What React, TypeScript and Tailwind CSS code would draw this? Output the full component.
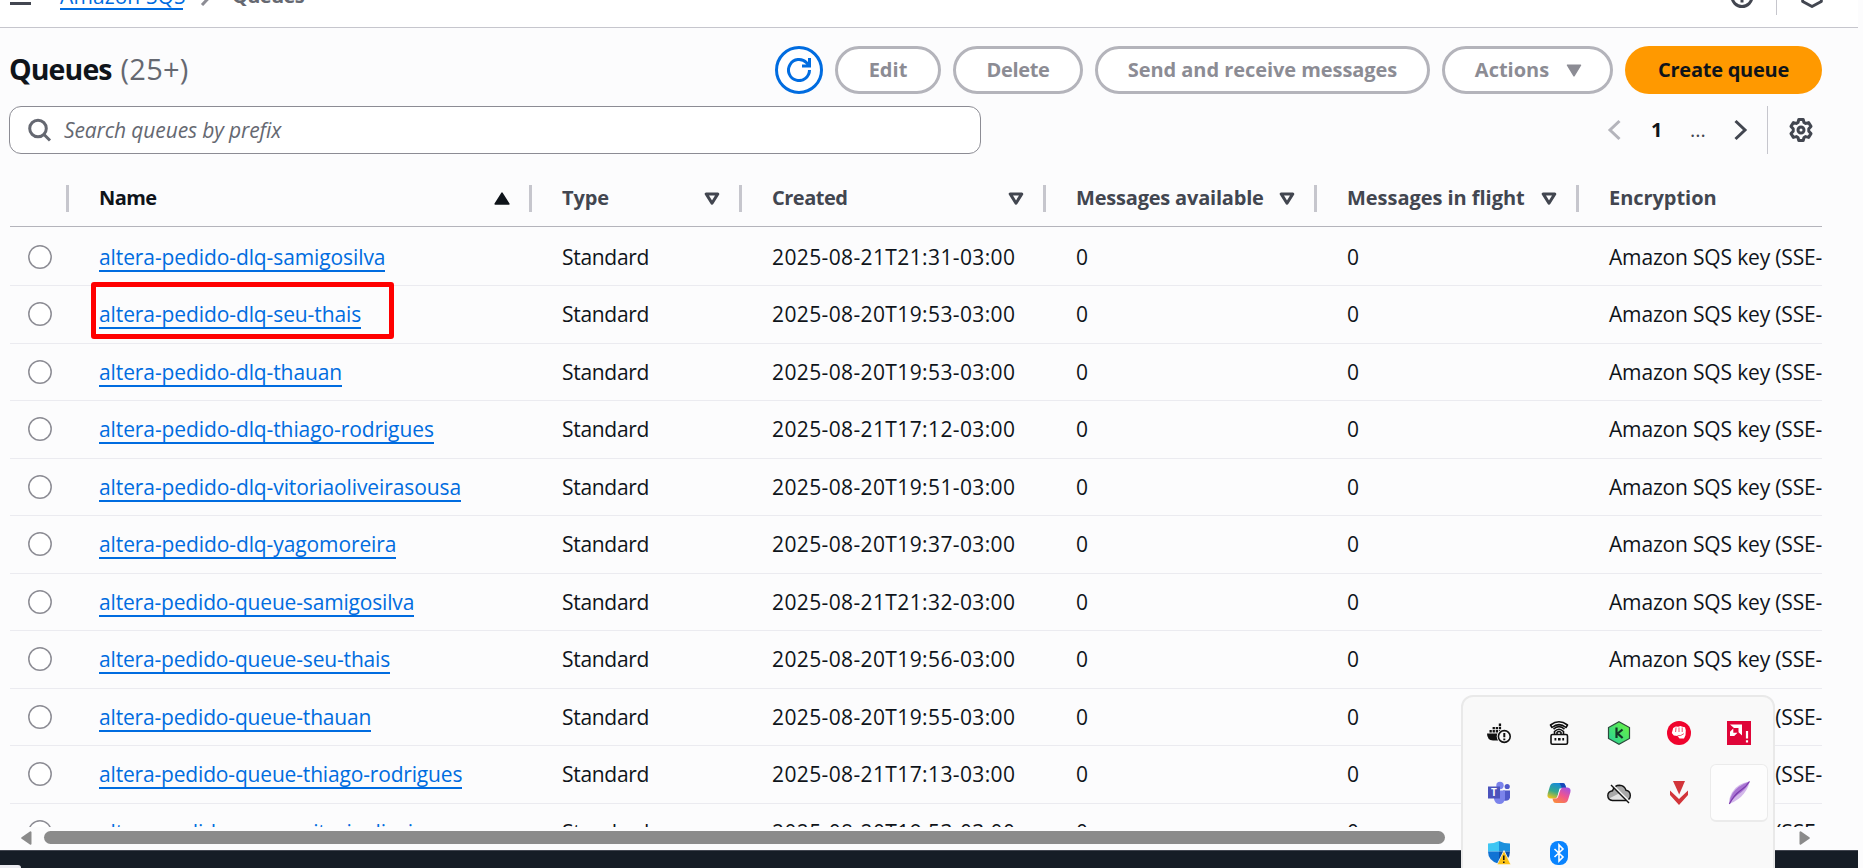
import React from "react";

type Queue = { name: string; created: string };

const queues: Queue[] = [
  { name: "altera-pedido-dlq-samigosilva", created: "2025-08-21T21:31-03:00" },
  { name: "altera-pedido-dlq-seu-thais", created: "2025-08-20T19:53-03:00" },
  { name: "altera-pedido-dlq-thauan", created: "2025-08-20T19:53-03:00" },
  { name: "altera-pedido-dlq-thiago-rodrigues", created: "2025-08-21T17:12-03:00" },
  { name: "altera-pedido-dlq-vitoriaoliveirasousa", created: "2025-08-20T19:51-03:00" },
  { name: "altera-pedido-dlq-yagomoreira", created: "2025-08-20T19:37-03:00" },
  { name: "altera-pedido-queue-samigosilva", created: "2025-08-21T21:32-03:00" },
  { name: "altera-pedido-queue-seu-thais", created: "2025-08-20T19:56-03:00" },
  { name: "altera-pedido-queue-thauan", created: "2025-08-20T19:55-03:00" },
  { name: "altera-pedido-queue-thiago-rodrigues", created: "2025-08-21T17:13-03:00" },
  { name: "altera-pedido-queue-vitoriaoliveirasousa", created: "2025-08-20T19:53-03:00" },
];

const columns = "grid grid-cols-[59px_463px_210px_304px_271px_262px_243px]";

function SortIcon({ active }: { active?: boolean }) {
  return active ? (
    <svg viewBox="0 0 16 13" className="h-[13px] w-4 shrink-0">
      <path d="M8 1.2 14.8 12H1.2Z" fill="#0f141a" stroke="#0f141a" strokeWidth="1.6" strokeLinejoin="round" />
    </svg>
  ) : (
    <svg viewBox="0 0 16 13" className="h-[13px] w-4 shrink-0">
      <path d="M2.2 1.9H13.8L8 11.2Z" fill="none" stroke="#424650" strokeWidth="3" strokeLinejoin="round" />
    </svg>
  );
}

function HeaderCell({ label, className, sort, active }: { label: string; className: string; sort: boolean; active?: boolean }) {
  return (
    <div className="flex h-full items-center justify-between">
      <span className={`pl-[30px] text-[20px] font-bold whitespace-nowrap ${active ? "text-[#0f141a]" : "text-[#424650]"} ${className}`}>{label}</span>
      {sort && (
        <span className="flex items-center gap-[19px]">
          <SortIcon active={active} />
          <span className="h-[27px] w-[3px] bg-[#c6c6cd]" />
        </span>
      )}
    </div>
  );
}

function DisabledButton({ children, className }: { children: React.ReactNode; className: string }) {
  return (
    <button className={`flex h-12 items-center justify-center rounded-full border-[3px] border-[#b4b4bb] bg-white text-[20px] font-bold whitespace-nowrap text-[#8c8c94] ${className}`}>
      {children}
    </button>
  );
}

function TopBar() {
  return (
    <header className="flex h-7 w-[1858px] items-start justify-between overflow-hidden border-b border-[#c6c6cd] bg-white">
      <div className="-mt-[21px] flex h-[31px] items-end pl-[10px]">
        <span className="mb-[5px] h-[3px] w-[21px] bg-[#424650]" />
        <a className="ml-[29px] h-[31px] w-[123px] border-b-2 border-[#006ce0] text-[21px] leading-[34px] tracking-[0.1px] whitespace-nowrap text-[#006ce0]">Amazon SQS</a>
        <svg viewBox="0 0 14 22" className="mb-[4px] ml-[17px] h-[22px] w-[14px]" fill="none" stroke="#8c8c94" strokeWidth="3">
          <path d="M2 1 11.5 11 2 21" />
        </svg>
        <span className="ml-[18px] h-[31px] text-[20px] leading-[34px] font-bold tracking-[-0.6px] text-[#656871]">Queues</span>
      </div>
      <div className="-mt-4 flex h-[31px] items-start pr-[34px]">
        <svg viewBox="0 0 24 24" className="size-6" fill="none" stroke="#424650" strokeWidth="3">
          <circle cx="12" cy="12.5" r="10" />
          <path d="M12 10.5V18.500" />
        </svg>
        <span className="ml-[22px] h-[31px] w-px bg-[#c6c6cd]" />
        <svg viewBox="0 0 24 24" className="ml-[23px] size-6" fill="none" stroke="#424650" strokeWidth="3" strokeLinejoin="round">
          <path d="M12 1.8 21.300 7v10.500L12 22.500 2.700 17.500V7Z" />
        </svg>
      </div>
    </header>
  );
}

function TitleRow() {
  return (
    <div className="flex h-12 items-center justify-between">
      <h1 className="-ml-px flex items-baseline pb-0.5">
        <span className="text-[28.5px] font-bold tracking-[-0.9px] text-[#0f141a]">Queues</span>
        <span className="ml-[9px] text-[29px] tracking-[0.2px] text-[#656871]">(25+)</span>
      </h1>
      <div className="flex gap-3">
        <button className="flex size-12 items-center justify-center rounded-full border-[3px] border-[#006ce0] bg-white">
          <svg viewBox="0 0 24 24" className="size-6" fill="none" stroke="#006ce0" strokeWidth="3">
            <path d="M22.500 12A10.500 10.500 0 1 1 19.600 4.800L21.800 7.500" />
            <path d="M22.500 0V7.900H15" />
          </svg>
        </button>
        <DisabledButton className="w-[106px]">Edit</DisabledButton>
        <DisabledButton className="w-[130px] tracking-[-0.33px]">Delete</DisabledButton>
        <DisabledButton className="w-[335px] tracking-[-0.06px]">Send and receive messages</DisabledButton>
        <DisabledButton className="w-[171px] gap-[17px] pl-[2px]">
          Actions
          <svg viewBox="0 0 16 13" className="h-[13px] w-4">
            <path d="M1.500 1.200h13L8 11.800Z" fill="#8c8c94" stroke="#8c8c94" strokeWidth="1.5" strokeLinejoin="round" />
          </svg>
        </DisabledButton>
        <button className="h-12 w-[197px] rounded-full bg-[#ff9900] text-[20px] font-bold tracking-[-0.25px] text-[#0f141a]">Create queue</button>
      </div>
    </div>
  );
}

function FilterRow() {
  return (
    <div className="mt-3 flex h-12 items-center justify-between">
      <div className="-ml-px flex h-12 w-[972px] items-center rounded-xl border border-[#8c8c94] bg-white pl-[18px]">
        <svg viewBox="0 0 24 24" className="size-6" fill="none" stroke="#656871" strokeWidth="3">
          <circle cx="10" cy="10.500" r="8.300" />
          <path d="m15.500 16 6.500 6.500" />
        </svg>
        <span className="ml-[12px] pt-px text-[21px] tracking-[-0.13px] text-[#656871] italic">Search queues by prefix</span>
      </div>
      <div className="flex h-12 items-center">
        <svg viewBox="0 0 14 24" className="h-6 w-[14px]" fill="none" stroke="#b4b4bb" strokeWidth="3">
          <path d="M12.500 3 3 12l9.500 9" />
        </svg>
        <span className="ml-[30px] w-[12px] text-[20px] font-bold text-[#0f141a]">1</span>
        <span className="ml-[27px] w-4 text-[20px] text-[#424650]">...</span>
        <svg viewBox="0 0 14 24" className="ml-[28px] h-6 w-[14px]" fill="none" stroke="#424650" strokeWidth="3">
          <path d="m1.500 3 9.500 9-9.500 9" />
        </svg>
        <span className="ml-[19px] h-12 w-px bg-[#c6c6cd]" />
        <svg viewBox="0 0 24 24" className="mr-[9px] ml-[21px] size-6" fill="none" stroke="#424650" strokeWidth="3" strokeLinejoin="round">
          <path d="M9.800 1.500h4.400l.8 3 1.600.9 3-.8 2.400 3.800-2.200 2.300v2.600l2.200 2.300-2.400 3.800-3-.8-1.600.9-.8 3H9.800l-.8-3-1.600-.9-3 .8-2.400-3.800 2.200-2.300v-2.600L2 8.400l2.400-3.800 3 .8L9 4.500Z" />
          <circle cx="12" cy="12" r="3" />
        </svg>
      </div>
    </div>
  );
}

function Row({ queue, highlighted }: { queue: Queue; highlighted: boolean }) {
  const spacing = queue.name.includes("-queue-") ? "tracking-[-0.17px]" : "tracking-[-0.1px]";
  return (
    <div className={`${columns} h-[57.5px] shrink-0 items-center border-b border-[#ebebf0] text-[21px] leading-[30px] whitespace-nowrap text-[#0f141a]`}>
      <svg viewBox="0 0 24 24" className="ml-[18px] size-6">
        <circle cx="12" cy="12" r="11.200" fill="#fff" stroke="#8c8c94" strokeWidth="1.500" />
      </svg>
      <span className="relative pl-[30px]">
        <a className={`inline-block h-[30px] border-b-2 border-[#006ce0] text-[#006ce0] ${spacing}`}>{queue.name}</a>
        {highlighted && <span className="absolute -top-[17px] left-[22px] h-[57px] w-[303px] rounded-[3px] border-[5px] border-[#ff0000]" />}
      </span>
      <span className="pl-[30px] tracking-[-0.3px]">Standard</span>
      <span className="pl-[30px] tracking-[0.38px]">{queue.created}</span>
      <span className="pl-[30px]">0</span>
      <span className="pl-[30px]">0</span>
      <span className="overflow-hidden pl-[30px] tracking-[-0.17px]">Amazon SQS key (SSE-SQS)</span>
    </div>
  );
}

function Table() {
  return (
    <div className="mt-4 h-[657px] overflow-hidden">
      <div className={`${columns} h-[57px] border-b border-[#b4b4bb]`}>
        <div className="flex h-full items-center justify-end">
          <span className="h-[27px] w-[3px] bg-[#c6c6cd]" />
        </div>
        <HeaderCell label="Name" className="tracking-[-0.55px]" sort active />
        <HeaderCell label="Type" className="tracking-[-0.1px]" sort />
        <HeaderCell label="Created" className="tracking-[-0.5px]" sort />
        <HeaderCell label="Messages available" className="tracking-[-0.2px]" sort />
        <HeaderCell label="Messages in flight" className="tracking-[-0.04px]" sort />
        <HeaderCell label="Encryption" className="tracking-[-0.05px]" sort={false} />
      </div>
      <div className="flex flex-col pt-[1.5px]">
        {queues.map((queue, i) => (
          <Row key={queue.name} queue={queue} highlighted={i === 1} />
        ))}
      </div>
    </div>
  );
}

function ScrollBar() {
  return (
    <div className="flex h-[23px] items-start pt-1">
      <svg viewBox="0 0 11 14" className="ml-[21px] h-[14px] w-[11px]">
        <path d="M9.500 1.200v11.600L1.200 7Z" fill="#8b8b8b" stroke="#8b8b8b" strokeWidth="2" strokeLinejoin="round" />
      </svg>
      <span className="ml-3 h-[13px] w-[1401px] rounded-full bg-[#8b8b8b]" />
      <svg viewBox="0 0 11 14" className="ml-[354px] h-[14px] w-[11px]">
        <path d="M1.500 1.200v11.600L9.800 7Z" fill="#8b8b8b" stroke="#8b8b8b" strokeWidth="2" strokeLinejoin="round" />
      </svg>
    </div>
  );
}

const icon = "size-6 overflow-visible";

const trayIcons = [
  <svg key="docker" viewBox="0 0 24 24" className={icon}>
    <path d="M0 12.500h16v7H6Q0 19 0 12.500Z" fill="#111" />
    <path d="M2.500 9h2.300v2.500H2.500ZM5.600 9h2.300v2.500H5.600ZM8.700 9H11v2.500H8.700ZM11.800 9h2.300v2.500h-2.300ZM5.600 6h2.300v2.300H5.600ZM8.700 6H11v2.300H8.700ZM11.800 6h2.300v2.300h-2.300ZM11.800 2.500h2.300v2.700h-2.300Z" fill="#111" />
    <circle cx="17.300" cy="15.500" r="7.600" fill="#f9f9f9" />
    <circle cx="17.300" cy="15.500" r="5.900" fill="#f9f9f9" stroke="#111" strokeWidth="1.600" />
    <path d="M17.300 12v4.200m0 1.200v1.800" stroke="#111" strokeWidth="2" />
  </svg>,
  <svg key="vpn" viewBox="0 0 24 24" className={icon} fill="none" stroke="#111" strokeWidth="1.600">
    <path d="M3.500 4Q12-2.500 20.500 4L19 6.500Q12 .8 5 6.500ZM6.500 8.200q5.500-5 11 0" strokeLinejoin="round" />
    <path d="M7.500 13.500V10.500q4.500-4.500 9 0v3M10 13.500v-2q2-2 4 0v2" />
    <rect x="4" y="13.500" width="16.500" height="9.700" rx="1.500" />
    <path d="M7.500 18.200h1.800m1.700 0h2.600m1.700 0h1.800" strokeWidth="2.600" />
  </svg>,
  <svg key="kaspersky" viewBox="0 0 24 24" className={icon}>
    <defs>
      <linearGradient id="kGreen" x1="0" y1="1" x2="1" y2="0">
        <stop offset="0" stopColor="#25cf9c" />
        <stop offset="1" stopColor="#6df53c" />
      </linearGradient>
    </defs>
    <path d="m12 .8 10.500 5.700v11L12 23.200 1.500 17.500v-11Z" fill="url(#kGreen)" stroke="#2b4a3b" strokeWidth="1.200" />
    <path d="M9.500 6.500V17M15.500 8.500l-4.800 4 4.900 4.500" fill="none" stroke="#143227" strokeWidth="2.200" />
  </svg>,
  <svg key="fist" viewBox="0 0 24 24" className={icon}>
    <circle cx="12" cy="12" r="12" fill="#f0032d" />
    <path d="M6.200 7 8.800 5.500l2.400.200 2.200-.700 2.200.700 2.400.500.800 3-.3 5-1.500 3.300h-4.500l-2-2.500-3.700-.5L4.800 12Z" fill="#fff" />
    <path d="M9 6.500 8.600 11M12 6.500V11M15.200 6.500V11M10.500 14.700l3.200-.2 3.200-1.800" fill="none" stroke="#f0032d" strokeWidth=".7" />
  </svg>,
  <svg key="amd" viewBox="0 0 24 24" className={icon}>
    <path d="M0 0h24v24H0Z" fill="#df0538" />
    <path d="M3 3.500h12v11l-3.500-3.300V7H7Z" fill="#fff" />
    <path d="M6.300 7.500 3 10.800V15h4.200l3.300-3.300H6.300Z" fill="#fff" />
    <path d="M20 10v7.500m0 1.700v2.300" stroke="#fff" strokeWidth="2.200" />
  </svg>,
  <svg key="teams" viewBox="0 0 24 24" className={icon}>
    <circle cx="13" cy="4.500" r="3.700" fill="#7b83eb" />
    <circle cx="20.200" cy="5.500" r="2.600" fill="#5059c9" />
    <path d="M16 9.500h7v7q-1 4-6 3Z" fill="#5059c9" />
    <path d="M7 9.500h11v8.500q-1 5-5.500 5T7 18Z" fill="#7b83eb" />
    <path d="M1 5.500h12v12H1Z" fill="#4b53bc" />
    <text x="7" y="15" textAnchor="middle" fontSize="10" fontWeight="700" fill="#fff">T</text>
  </svg>,
  <svg key="copilot" viewBox="0 0 24 24" className={icon}>
    <defs>
      <linearGradient id="cpLeft" x1=".6" y1="0" x2=".2" y2="1">
        <stop offset="0" stopColor="#1689de" />
        <stop offset=".55" stopColor="#35a98c" />
        <stop offset="1" stopColor="#f4c414" />
      </linearGradient>
      <linearGradient id="cpRight" x1=".8" y1="0" x2=".2" y2="1">
        <stop offset="0" stopColor="#a64fe0" />
        <stop offset=".5" stopColor="#f0568d" />
        <stop offset="1" stopColor="#fb8b3c" />
      </linearGradient>
    </defs>
    <path d="M7 2h9q2 0 2.600 3l.6 2h-3.700q-2.500 0-3.500 3.500L10.500 15q-.8 2.500-3 2.500H4q-4.500 0-3.300-5L3 5q1-3 4-3Z" fill="url(#cpLeft)" />
    <path d="M12.500 2H16q2 0 2.600 3l.6 2H15Z" fill="#1648b8" />
    <path d="M17 22H9q-2.500 0-3-2.500l-.5-2h2q2.500 0 3.400-3L12.500 10q1-3.500 3.500-3.500h4.500q4 .5 2.800 5L21 19q-1 3-4 3Z" fill="url(#cpRight)" />
    <path d="M12.500 7.500h2.200q-1.500 1-2 3l-1.400 4.700q-.5 1.800-1.800 2.300H8q2 0 2.700-2.500Z" fill="#fff" />
  </svg>,
  <svg key="cloud" viewBox="0 0 24 24" className={icon}>
    <path d="M5.500 19.500Q.8 19 .8 14.500q.2-4 4.700-4.700Q7.500 4.300 12.500 4.300q5 .200 6.500 5 4.300.8 4.300 5.200t-4.800 5Z" fill="#a9a9a9" />
    <path d="M2 17.500 13 12l9 6.500-3.500 1h-13Z" fill="#e3e3e3" />
    <path d="M5.500 19.500Q.8 19 .8 14.500q.2-4 4.700-4.700Q7.500 4.300 12.500 4.300q5 .200 6.500 5 4.300.8 4.300 5.200t-4.800 5Z" fill="none" stroke="#111" strokeWidth="1.400" />
    <path d="m5 3.500 18 18" stroke="#f9f9f9" strokeWidth="2" />
    <path d="m4 4 18 18" stroke="#111" strokeWidth="1.400" />
  </svg>,
  <svg key="vred" viewBox="0 0 24 24" className={icon} fill="#d2353a">
    <path d="M6 0h12l-5.800 13.500Z" />
    <path d="m3 9.500 9 8.500 9-8.500v4.500l-9 10-9-10Z" />
  </svg>,
  <svg key="feather" viewBox="0 0 24 24" className={icon}>
    <path d="M22.500.5Q10 2.500 5 11.500 1.500 18 2.300 23 12 19 17 12.500 22 6 22.500.5Z" fill="#d3b8ea" />
    <path d="M22.500.5Q10 5 5.500 12.500 2.500 17 2.300 23 8 15 14 11.500 20 7 22.500.5Z" fill="#a874d3" />
    <path d="M2.300 23Q7 14 13.500 9.500 19 6 22.500.5" fill="none" stroke="#7a3aac" strokeWidth="1.100" />
  </svg>,
  <svg key="shield" viewBox="0 0 24 24" className={icon}>
    <path d="M12 0Q7 2.500 1 2.500v8h11Z" fill="#3fc6f3" />
    <path d="M12 0q5 2.500 11 2.500v8H12Z" fill="#1b90dd" />
    <path d="M1 10.500h11V23Q1 20 1 10.500Z" fill="#1173d4" />
    <path d="M12 10.500h11Q23 20 12 23Z" fill="#0b4fa8" />
    <path d="M17 9.500 24 23.700H10Z" fill="#fdc315" stroke="#f9f9f9" strokeWidth=".8" />
    <path d="M16.800 14.500v4.500m0 1.500v1.600" stroke="#111" strokeWidth="1.500" />
  </svg>,
  <svg key="bluetooth" viewBox="0 0 24 24" className={icon}>
    <rect x="3" width="18" height="24" rx="8" fill="#0a84fe" />
    <path d="m7.500 8 8.500 8-4 4V4l4 4-8.500 8" fill="none" stroke="#fff" strokeWidth="1.600" />
  </svg>,
];

function Tray() {
  return (
    <div className="absolute top-[695px] left-[1461px] h-[190px] w-[314px] rounded-xl border-2 border-[#e9e9e9] bg-[#f9f9f9] pt-[6px] pl-[6px]">
      <div className="grid grid-cols-[repeat(5,60px)] auto-rows-[60px]">
        {trayIcons.map((node, i) => (
          <div key={i} className="flex items-center justify-center">
            {i === 9 ? (
              <span className="flex size-[58px] shrink-0 items-center justify-center rounded-md border border-b-2 border-[#ebebeb] bg-[#fdfdfd]">{node}</span>
            ) : (
              node
            )}
          </div>
        ))}
      </div>
    </div>
  );
}

export default function App() {
  return (
    <div className="relative h-[868px] w-[1863px] overflow-hidden bg-[#fcfcfd] font-['Open_Sans','Noto_Sans',sans-serif]">
      <TopBar />
      <main className="ml-[10px] w-[1812px] pt-[18px]">
        <TitleRow />
        <FilterRow />
        <Table />
      </main>
      <ScrollBar />
      <footer className="flex h-[18px] w-[1858px] items-end border-t border-[#424650] bg-[#161d26]">
        <span className="h-[3px] w-[21px] rounded-tr bg-[#ebebf0]" />
      </footer>
      <Tray />
    </div>
  );
}
